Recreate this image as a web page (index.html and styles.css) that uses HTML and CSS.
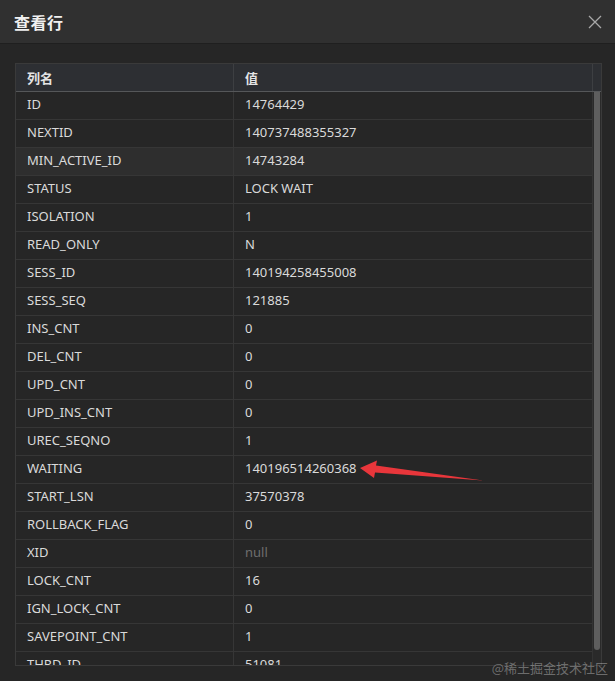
FILE: index.html
```html
<!DOCTYPE html>
<html lang="zh-CN">
<head>
<meta charset="utf-8">
<title>查看行</title>
<link rel="stylesheet" href="styles.css">
</head>
<body>
<div class="dialog">
  <div class="titlebar">
    <span class="title">查看行</span>
    <svg class="close" width="14" height="14" viewBox="0 0 14 14"><path d="M1 1L13 13M13 1L1 13" stroke="#a8a8a8" stroke-width="1.3" fill="none"/></svg>
  </div>
  <div class="content">
    <div class="table">
      <div class="thead">
        <div class="cell">列名</div>
        <div class="cell">值</div>
        <div class="gutter"></div>
      </div>
      <div class="tbody">
        <div class="rows">
          <div class="row"><div class="cell">ID</div><div class="cell">14764429</div></div>
          <div class="row"><div class="cell">NEXTID</div><div class="cell">140737488355327</div></div>
          <div class="row hover"><div class="cell">MIN_ACTIVE_ID</div><div class="cell">14743284</div></div>
          <div class="row"><div class="cell">STATUS</div><div class="cell">LOCK WAIT</div></div>
          <div class="row"><div class="cell">ISOLATION</div><div class="cell">1</div></div>
          <div class="row"><div class="cell">READ_ONLY</div><div class="cell">N</div></div>
          <div class="row"><div class="cell">SESS_ID</div><div class="cell">140194258455008</div></div>
          <div class="row"><div class="cell">SESS_SEQ</div><div class="cell">121885</div></div>
          <div class="row"><div class="cell">INS_CNT</div><div class="cell">0</div></div>
          <div class="row"><div class="cell">DEL_CNT</div><div class="cell">0</div></div>
          <div class="row"><div class="cell">UPD_CNT</div><div class="cell">0</div></div>
          <div class="row"><div class="cell">UPD_INS_CNT</div><div class="cell">0</div></div>
          <div class="row"><div class="cell">UREC_SEQNO</div><div class="cell">1</div></div>
          <div class="row"><div class="cell">WAITING</div><div class="cell">140196514260368</div></div>
          <div class="row"><div class="cell">START_LSN</div><div class="cell">37570378</div></div>
          <div class="row"><div class="cell">ROLLBACK_FLAG</div><div class="cell">0</div></div>
          <div class="row"><div class="cell">XID</div><div class="cell null">null</div></div>
          <div class="row"><div class="cell">LOCK_CNT</div><div class="cell">16</div></div>
          <div class="row"><div class="cell">IGN_LOCK_CNT</div><div class="cell">0</div></div>
          <div class="row"><div class="cell">SAVEPOINT_CNT</div><div class="cell">1</div></div>
          <div class="row"><div class="cell">THRD_ID</div><div class="cell">51081</div></div>
        </div>
        <div class="scrollbar"><div class="thumb"></div></div>
      </div>
    </div>
  </div>
  <svg class="arrow" width="615" height="681" viewBox="0 0 615 681">
    <polygon points="360,469 377,461.5 376,466.5 483,481.5 375,473.5 374,479" fill="#e8363b"/>
  </svg>
  <div class="watermark">@稀土掘金技术社区</div>
</div>
</body>
</html>
```

FILE: styles.css
```css
html, body {
  margin: 0;
  padding: 0;
}
body {
  background: #262626;
  font-family: "Noto Sans", "Noto Sans CJK SC", sans-serif;
  font-size: 13px;
  color: #dadada;
  width: 615px;
  height: 681px;
  overflow: hidden;
}
.dialog {
  position: relative;
  height: 681px;
}
.titlebar {
  height: 43px;
  background: #303030;
  border-top: 1px solid #3a3a3a;
  border-bottom: 1px solid #1f1f1f;
  box-sizing: content-box;
  display: flex;
  align-items: center;
  justify-content: space-between;
  padding: 0 14px 0 14px;
  margin-top: -1px;
}
.title {
  font-family: "Noto Sans CJK SC", sans-serif;
  font-weight: 700;
  font-size: 16px;
  color: #f0f0f0;
  letter-spacing: 0.5px;
}
.close {
  display: block;
  margin-right: -1px;
}
.content {
  padding: 19px 13px 0 15px;
}
.table {
  border: 1px solid #3a3a3a;
  height: 601px;
  overflow: hidden;
  display: flex;
  flex-direction: column;
}
.thead {
  display: grid;
  grid-template-columns: 218px 1fr 8px;
  height: 27px;
  background: #2d2f33;
  border-bottom: 1px solid #555759;
  flex: none;
}
.thead .cell {
  font-weight: 700;
  font-family: "Noto Sans CJK SC", sans-serif;
  color: #e4e4e4;
  border-right: 1px solid #3d3f42;
  padding-bottom: 1px;
}
.thead .gutter {
  background: #2d2f33;
}
.cell {
  display: flex;
  align-items: center;
  padding-left: 11px;
  padding-bottom: 3px;
  white-space: nowrap;
  overflow: hidden;
}
.tbody {
  flex: 1;
  display: flex;
  min-height: 0;
}
.rows {
  flex: 1;
  min-width: 0;
}
.row {
  display: grid;
  grid-template-columns: 218px 1fr;
  height: 27px;
  border-bottom: 1px solid #363636;
  background: #262626;
}
.row .cell:first-child {
  border-right: 1px solid #363636;
}
.row.hover {
  background: #2e2e2e;
}
.cell.null {
  color: #6e6e6e;
}
.scrollbar {
  width: 8px;
  background: #2a2a2a;
  border-left: 1px solid #333;
  flex: none;
}
.thumb {
  height: 558px;
  margin: 0 1px;
  background: #5e5e5e;
  border-radius: 0 0 3px 3px;
}
.arrow {
  position: absolute;
  left: 0;
  top: 0;
  pointer-events: none;
}
.watermark {
  position: absolute;
  right: 7px;
  bottom: 3px;
  font-family: "Noto Sans CJK SC", sans-serif;
  font-size: 13px;
  color: rgba(200, 200, 200, 0.45);
}
```
